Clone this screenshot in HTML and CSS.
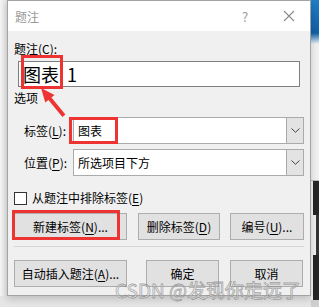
FILE: index.html
```html
<!DOCTYPE html>
<html lang="zh-CN">
<head>
    <meta charset="UTF-8">
    <meta name="viewport" content="width=device-width, initial-scale=1.0">
    <title>题注</title>
    <link rel="stylesheet" href="styles.css">
</head>
<body>

<div class="screen">
    <div class="edge"></div>

    <div class="dialog">
        <div class="titlebar">
            <span class="title">题注</span>
            <span class="help">?</span>
            <span class="close">
                <svg width="12" height="12" viewBox="0 0 12 12"><path d="M1 1L11 11M11 1L1 11" stroke="#8a8a8a" stroke-width="1.1" fill="none"/></svg>
            </span>
        </div>

        <div class="content">
            <div class="caption-label">题注(<u>C</u>):</div>
            <div class="caption-input">图表 1</div>

            <div class="group-label">选项</div>
            <div class="options">
                <div class="field">
                    <span class="field-label">标签(<u>L</u>):</span>
                    <div class="combo">
                        <span class="combo-text">图表</span>
                        <span class="combo-btn">
                            <svg width="9" height="5" viewBox="0 0 9 5"><path d="M0.5 0.5L4.5 4.3L8.5 0.5" stroke="#444" stroke-width="1" fill="none"/></svg>
                        </span>
                    </div>
                </div>
                <div class="field">
                    <span class="field-label">位置(<u>P</u>):</span>
                    <div class="combo">
                        <span class="combo-text">所选项目下方</span>
                        <span class="combo-btn">
                            <svg width="9" height="5" viewBox="0 0 9 5"><path d="M0.5 0.5L4.5 4.3L8.5 0.5" stroke="#444" stroke-width="1" fill="none"/></svg>
                        </span>
                    </div>
                </div>
            </div>

            <div class="check"><span class="box"></span>从题注中排除标签(<u>E</u>)</div>

            <div class="btn-row">
                <div class="btn btn-wide">新建标签(<u>N</u>)...</div>
                <div class="btn btn-del">删除标签(<u>D</u>)</div>
                <div class="btn btn-num">编号(<u>U</u>)...</div>
            </div>
            <div class="sep"></div>
            <div class="btn-row btn-row-last">
                <div class="btn btn-wide">自动插入题注(<u>A</u>)...</div>
                <div class="btn btn-ok">确定</div>
                <div class="btn btn-cancel">取消</div>
            </div>
        </div>

        <!-- annotations drawn over the dialog -->
        <div class="mark mark-caption"></div>
        <div class="mark mark-label"></div>
        <div class="mark mark-new"></div>
        <svg class="arrow" width="80" height="130" viewBox="0 0 80 130">
            <polygon points="33,87 46.5,94 43.4,96.5 57.4,113.5 54.4,116.1 40.4,99.1 37.3,101.6" fill="#ee3333"/>
        </svg>
        <div class="watermark">CSDN @发现你走远了</div>
    </div>

    <div class="desk">
        <div class="desk-blue"></div>
        <div class="desk-light"></div>
        <div class="desk-dark"></div>
        <div class="desk-mid"></div>
        <div class="desk-dark desk-dark-low"></div>
        <div class="desk-foot"></div>
    </div>
</div>

</body>
</html>
```

FILE: styles.css
```css
/* Base page */
body {
    margin: 0;
    padding: 0;
    font-family: "Noto Sans CJK SC", "Microsoft YaHei", sans-serif;
    font-size: 12px;
    color: #000;
}

u {
    text-decoration-thickness: 1px;
    text-underline-offset: 2px;
}

.screen {
    display: flex;
    align-items: flex-start;
    width: 319px;
    height: 307px;
    overflow: hidden;
    background-color: #e6e6e6;
}

.edge {
    width: 7px;
    height: 296px;
    background: linear-gradient(to right, #f6f6f6, #e2e2e2);
}

/* Dialog window */
.dialog {
    position: relative;
    width: 304px;
    height: 296px;
    box-sizing: border-box;
    border: 1px solid #a3a3a3;
    background-color: #f0f0f0;
    box-shadow: 0 3px 8px rgba(0, 0, 0, 0.18);
}

.titlebar {
    display: flex;
    align-items: center;
    height: 30px;
    padding-left: 7px;
    background-color: #fff;
}

.title {
    color: #999;
    font-size: 12px;
}

.help {
    margin-left: auto;
    color: #999;
    font-size: 13px;
    width: 12px;
}

.close {
    display: flex;
    margin: 0 15px 0 29px;
}

.content {
    padding-left: 6px;
}

.caption-label {
    margin-top: 10px;
    line-height: 16px;
}

.caption-input {
    margin: 4px 0 0 4px;
    width: 282px;
    height: 26px;
    box-sizing: border-box;
    border: 1px solid #7f7f7f;
    background-color: #fff;
    padding-left: 4px;
    font-size: 18px;
    line-height: 24px;
    word-spacing: 4px;
}

.group-label {
    margin-top: 3px;
    line-height: 16px;
}

/* Label / position rows */
.options {
    display: flex;
    flex-direction: column;
    gap: 5px;
    margin-top: 11px;
    padding-left: 10px;
}

.field {
    display: flex;
    align-items: center;
}

.field-label {
    width: 49px;
}

.combo {
    display: flex;
    width: 231px;
    height: 27px;
    box-sizing: border-box;
    border: 1px solid #ababab;
    background-color: #fff;
}

.combo-text {
    flex: 1;
    padding-left: 4px;
    line-height: 25px;
}

.combo-btn {
    display: flex;
    align-items: center;
    justify-content: center;
    width: 16px;
    background-color: #e3e3e3;
    border-left: 1px solid #ababab;
}

/* Checkbox */
.check {
    display: flex;
    align-items: center;
    margin-top: 14px;
    line-height: 16px;
}

.box {
    width: 13px;
    height: 13px;
    box-sizing: border-box;
    border: 1px solid #333;
    background-color: #fff;
    margin-right: 5px;
}

/* Buttons */
.btn-row {
    display: flex;
    margin-top: 7px;
}

.btn-row-last {
    margin-top: 13px;
}

.btn {
    display: flex;
    align-items: center;
    justify-content: center;
    height: 27px;
    box-sizing: border-box;
    border: 1px solid #adadad;
    background-color: #e1e1e1;
}

.btn-wide {
    width: 113px;
}

.btn-del {
    width: 82px;
    margin-left: 11px;
}

.btn-num {
    width: 74px;
    margin-left: 10px;
}

.btn-ok {
    width: 73px;
    margin-left: 19px;
}

.btn-cancel {
    width: 73px;
    margin-left: 11px;
}

.sep {
    margin-top: 6px;
    width: 290px;
    height: 1px;
    background-color: #d6d6d6;
}

/* Red annotations */
.mark {
    position: absolute;
    box-sizing: border-box;
    border: 3px solid #ee3333;
}

.mark-caption {
    left: 13px;
    top: 54px;
    width: 42px;
    height: 34px;
}

.mark-label {
    left: 61px;
    top: 116px;
    width: 49px;
    height: 27px;
}

.mark-new {
    left: 4px;
    top: 209px;
    width: 108px;
    height: 30px;
}

.arrow {
    position: absolute;
    left: 0;
    top: 0;
}

.watermark {
    position: absolute;
    left: 107px;
    top: 278px;
    font-size: 19px;
    line-height: 22px;
    white-space: nowrap;
    color: rgba(255, 255, 255, 0.55);
    -webkit-text-stroke: 0.8px rgba(110, 110, 110, 0.6);
}

/* Desktop behind the dialog */
.desk {
    display: flex;
    flex-direction: column;
    width: 8px;
    height: 307px;
}

.desk-blue {
    height: 44px;
    background: linear-gradient(to bottom, #1f7fc8 0%, #0f5fa5 75%, #eef4f8 100%);
}

.desk-light {
    height: 136px;
    background-color: #f1f1f1;
    border-bottom: 1px solid #b9b9b9;
}

.desk-dark {
    height: 34px;
    background: linear-gradient(to right, #f4f4f4 0 2px, #262626 2px);
}

.desk-mid {
    height: 40px;
    background: linear-gradient(to right, #f0f0f0 0 5px, #333 5px);
}

.desk-dark-low {
    height: 45px;
}

.desk-foot {
    flex: 1;
    background-color: #cfcfcf;
}
```
